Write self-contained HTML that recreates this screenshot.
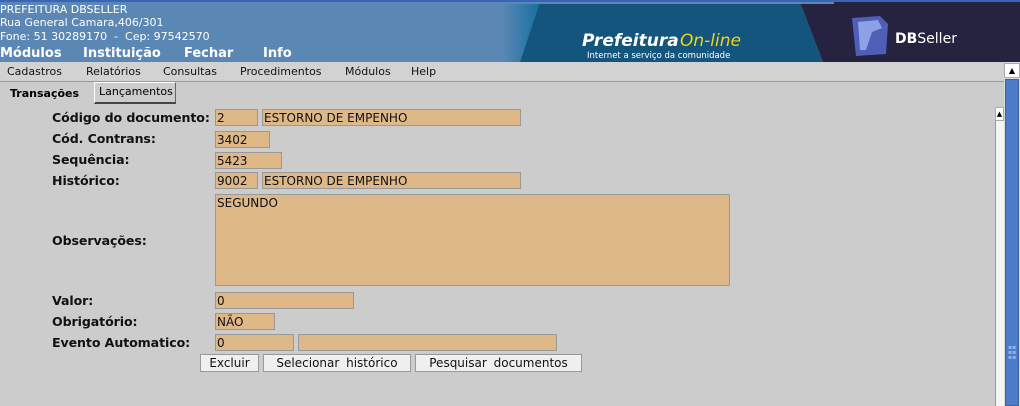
<!DOCTYPE html>
<html><head><meta charset="utf-8"><style>
body{margin:0;width:1020px;height:406px;overflow:hidden;background:#cccccc;font-family:"DejaVu Sans","Liberation Sans",sans-serif;position:relative}
.a{position:absolute}
.hd{left:0;top:0;width:1020px;height:62px;background:#5a87b4;border-top:2px solid #3a64b8;box-sizing:border-box}
.ht{color:#fff;font-size:11px;left:0}
.hm{color:#fff;font-size:13px;font-weight:bold;top:46px}
.mb{left:0;top:62px;width:1004px;height:19px;background:#d2d2d2;border-bottom:1px solid #999}
.mi{top:65px;font-size:11px;color:#111}
.lb{font-size:12.6px;font-weight:bold;color:#111;left:52px;letter-spacing:-0.1px}
.in{background:#deb887;border:1px solid #999;box-sizing:border-box;font-size:12px;color:#111;padding:1px 0 0 1px;line-height:14px}
.bt{background:#f0f0f0;border:1px solid #999;box-sizing:border-box;font-size:12px;text-align:center;line-height:16px;height:18px;top:354px;color:#111;word-spacing:3px}
</style></head><body>
<div class="a hd"></div>
<div class="a ht" style="top:3px">PREFEITURA DBSELLER</div>
<div class="a ht" style="top:16px">Rua General Camara,406/301</div>
<div class="a ht" style="top:30px">Fone: 51 30289170 &nbsp;- &nbsp;Cep: 97542570</div>
<div class="a hm" style="left:0">Módulos</div>
<div class="a hm" style="left:83px">Instituição</div>
<div class="a hm" style="left:184px">Fechar</div>
<div class="a hm" style="left:263px">Info</div>
<svg class="a" style="left:500px;top:2px" width="520" height="60">
<defs><linearGradient id="g" x1="0" x2="1"><stop offset="0" stop-color="#5a87b4"/><stop offset="1" stop-color="#1670a0"/></linearGradient></defs>
<polygon points="3,0 40,0 20,60 3,60" fill="url(#g)"/>
<polygon points="40,0 300,0 323,60 20,60" fill="#13557d"/>
<polygon points="300,0 520,0 520,60 323,60" fill="#25233f"/>
<rect x="0" y="0" width="334" height="2" fill="#5a87b4"/>
<path d="M352 16 L380 14 L388 22 L386 52 L356 54 Z" fill="#4f5fb8"/>
<path d="M358 20 L378 18 L382 26 L372 30 L366 48 L360 48 Z" fill="#8da2e6"/>
<text x="82" y="44" font-family="DejaVu Sans" font-size="17" font-weight="bold" font-style="italic" fill="#fff">Prefeitura</text>
<text x="180" y="44" font-family="DejaVu Sans" font-size="17" font-style="italic" fill="#f2d21a">On-line</text>
<text x="87" y="56" font-family="DejaVu Sans" font-size="8.5" fill="#fff">Internet a serviço da comunidade</text>
<text x="395" y="41" font-family="DejaVu Sans" font-size="14" fill="#fff"><tspan font-weight="bold">DB</tspan>Seller</text>
</svg>
<div class="a mb"></div>
<div class="a mi" style="left:7px">Cadastros</div>
<div class="a mi" style="left:86px">Relatórios</div>
<div class="a mi" style="left:163px">Consultas</div>
<div class="a mi" style="left:240px">Procedimentos</div>
<div class="a mi" style="left:345px">Módulos</div>
<div class="a mi" style="left:411px">Help</div>
<div class="a" style="left:10px;top:87px;font-size:11px;font-weight:bold">Transações</div>
<div class="a" style="left:94px;top:82px;width:82px;height:22px;border:1px solid #fff;border-right-color:#666;border-bottom:2px solid #444;box-sizing:border-box;font-size:11px;padding:2px 0 0 4px">Lançamentos</div>

<div class="a lb" style="top:110px">Código do documento:</div>
<div class="a in" style="left:215px;top:109px;width:43px;height:17px">2</div>
<div class="a in" style="left:262px;top:109px;width:259px;height:17px">ESTORNO DE EMPENHO</div>
<div class="a lb" style="top:131px">Cód. Contrans:</div>
<div class="a in" style="left:215px;top:131px;width:55px;height:17px">3402</div>
<div class="a lb" style="top:152px">Sequência:</div>
<div class="a in" style="left:215px;top:152px;width:67px;height:17px">5423</div>
<div class="a lb" style="top:173px">Histórico:</div>
<div class="a in" style="left:215px;top:172px;width:43px;height:17px">9002</div>
<div class="a in" style="left:262px;top:172px;width:259px;height:17px">ESTORNO DE EMPENHO</div>
<div class="a lb" style="top:233px">Observações:</div>
<div class="a in" style="left:215px;top:194px;width:515px;height:92px">SEGUNDO</div>
<div class="a lb" style="top:293px">Valor:</div>
<div class="a in" style="left:215px;top:292px;width:139px;height:17px">0</div>
<div class="a lb" style="top:314px">Obrigatório:</div>
<div class="a in" style="left:215px;top:313px;width:60px;height:17px">NÃO</div>
<div class="a lb" style="top:335px">Evento Automatico:</div>
<div class="a in" style="left:215px;top:334px;width:79px;height:17px">0</div>
<div class="a in" style="left:298px;top:334px;width:259px;height:17px"></div>
<div class="a bt" style="left:200px;width:59px">Excluir</div>
<div class="a bt" style="left:263px;width:148px">Selecionar histórico</div>
<div class="a bt" style="left:415px;width:167px">Pesquisar documentos</div>

<div class="a" style="left:995px;top:107px;width:9px;height:299px;background:#f4f4f4;border-left:1px solid #999"></div>
<div class="a" style="left:995px;top:107px;width:9px;height:14px;background:#fff;border:1px solid #aaa;box-sizing:border-box;font-size:7px;text-align:center;line-height:12px">▲</div>
<div class="a" style="left:1004px;top:62px;width:16px;height:344px;background:#ddd"></div>
<div class="a" style="left:1004px;top:63px;width:16px;height:15px;background:#fff;border:1px solid #aaa;box-sizing:border-box;font-size:8px;text-align:center;line-height:13px">▲</div>
<div class="a" style="left:1005px;top:79px;width:14px;height:327px;background:#4a7cc8;border:1px solid #3562a8;box-sizing:border-box"></div>
<div class="a" style="left:1008px;top:345px;font-size:6px;color:#8fb0e8;line-height:5px">▪▪<br>▪▪<br>▪▪</div>
</body></html>
